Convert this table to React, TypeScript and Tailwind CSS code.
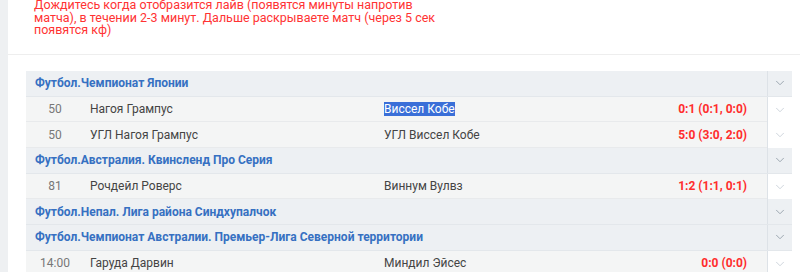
import { ChevronDown } from "lucide-react";

type Row =
  | { kind: "league"; title: string }
  | { kind: "match"; time: string; home: string; away: string; score: string; picked?: boolean };

const rows: Row[] = [
  { kind: "league", title: "Футбол.Чемпионат Японии" },
  { kind: "match", time: "50", home: "Нагоя Грампус", away: "Виссел Кобе", score: "0:1 (0:1, 0:0)", picked: true },
  { kind: "match", time: "50", home: "УГЛ Нагоя Грампус", away: "УГЛ Виссел Кобе", score: "5:0 (3:0, 2:0)" },
  { kind: "league", title: "Футбол.Австралия. Квинсленд Про Серия" },
  { kind: "match", time: "81", home: "Рочдейл Роверс", away: "Виннум Вулвз", score: "1:2 (1:1, 0:1)" },
  { kind: "league", title: "Футбол.Непал. Лига района Синдхупалчок" },
  { kind: "league", title: "Футбол.Чемпионат Австралии. Премьер-Лига Северной территории" },
  { kind: "match", time: "14:00", home: "Гаруда Дарвин", away: "Миндил Эйсес", score: "0:0 (0:0)" },
];

const LeagueRow = ({ title }: { title: string }) => (
  <div className="flex h-[25.7px] border-b border-[#e3e7eb] bg-[#edf0f3]">
    <div className="flex flex-1 items-center pl-[9px] text-[12px] font-bold text-[#3670c2]">{title}</div>
    <div className="flex w-[25px] items-center justify-center border-l border-[#dde2e7]">
      <ChevronDown className="h-[14px] w-[14px] text-[#98a2ac]" strokeWidth={1.6} />
    </div>
  </div>
);

const MatchRow = ({ time, home, away, score, picked }: Extract<Row, { kind: "match" }>) => (
  <div className="flex h-[25.7px]">
    <div className="flex flex-1 items-center border-b border-[#e8eaec] bg-[#f4f5f5] text-[12px] text-[#444]">
      <span className="w-[58px] text-center text-[#777]">{time}</span>
      <span className="ml-[6px] w-[294px]">{home}</span>
      <span className="flex-1">
        {picked ? <span className="bg-[#3a6fd8] text-white">{away}</span> : away}
      </span>
      <span className="pr-[20px] font-bold text-[#ff2d2d]">{score}</span>
    </div>
    <div className="flex w-[25px] items-center justify-center border-l border-[#dde2e7] bg-white">
      <ChevronDown className="h-[14px] w-[14px] text-[#c4ccd4]" strokeWidth={1.4} />
    </div>
  </div>
);

export default function App() {
  return (
    <div className="flex h-[272px] overflow-hidden bg-[#eef0f2] font-['Roboto',sans-serif]">
      <div className="ml-[8px] flex-1 bg-white">
        <div className="h-[55px] overflow-hidden border-b border-[#eeeeee] pl-[26px]">
          <p className="-mt-[1px] w-[420px] text-[12.5px] leading-[12.7px] text-[#ff3333]">
            Дождитесь когда отобразится лайв (появятся минуты напротив матча), в течении 2-3 минут. Дальше раскрываете матч (через 5 сек появятся кф)
          </p>
        </div>
        <div className="mr-[8px] ml-[18px] mt-[16px]">
          {rows.map((r, i) =>
            r.kind === "league" ? <LeagueRow key={i} title={r.title} /> : <MatchRow key={i} {...r} />
          )}
        </div>
      </div>
    </div>
  );
}
